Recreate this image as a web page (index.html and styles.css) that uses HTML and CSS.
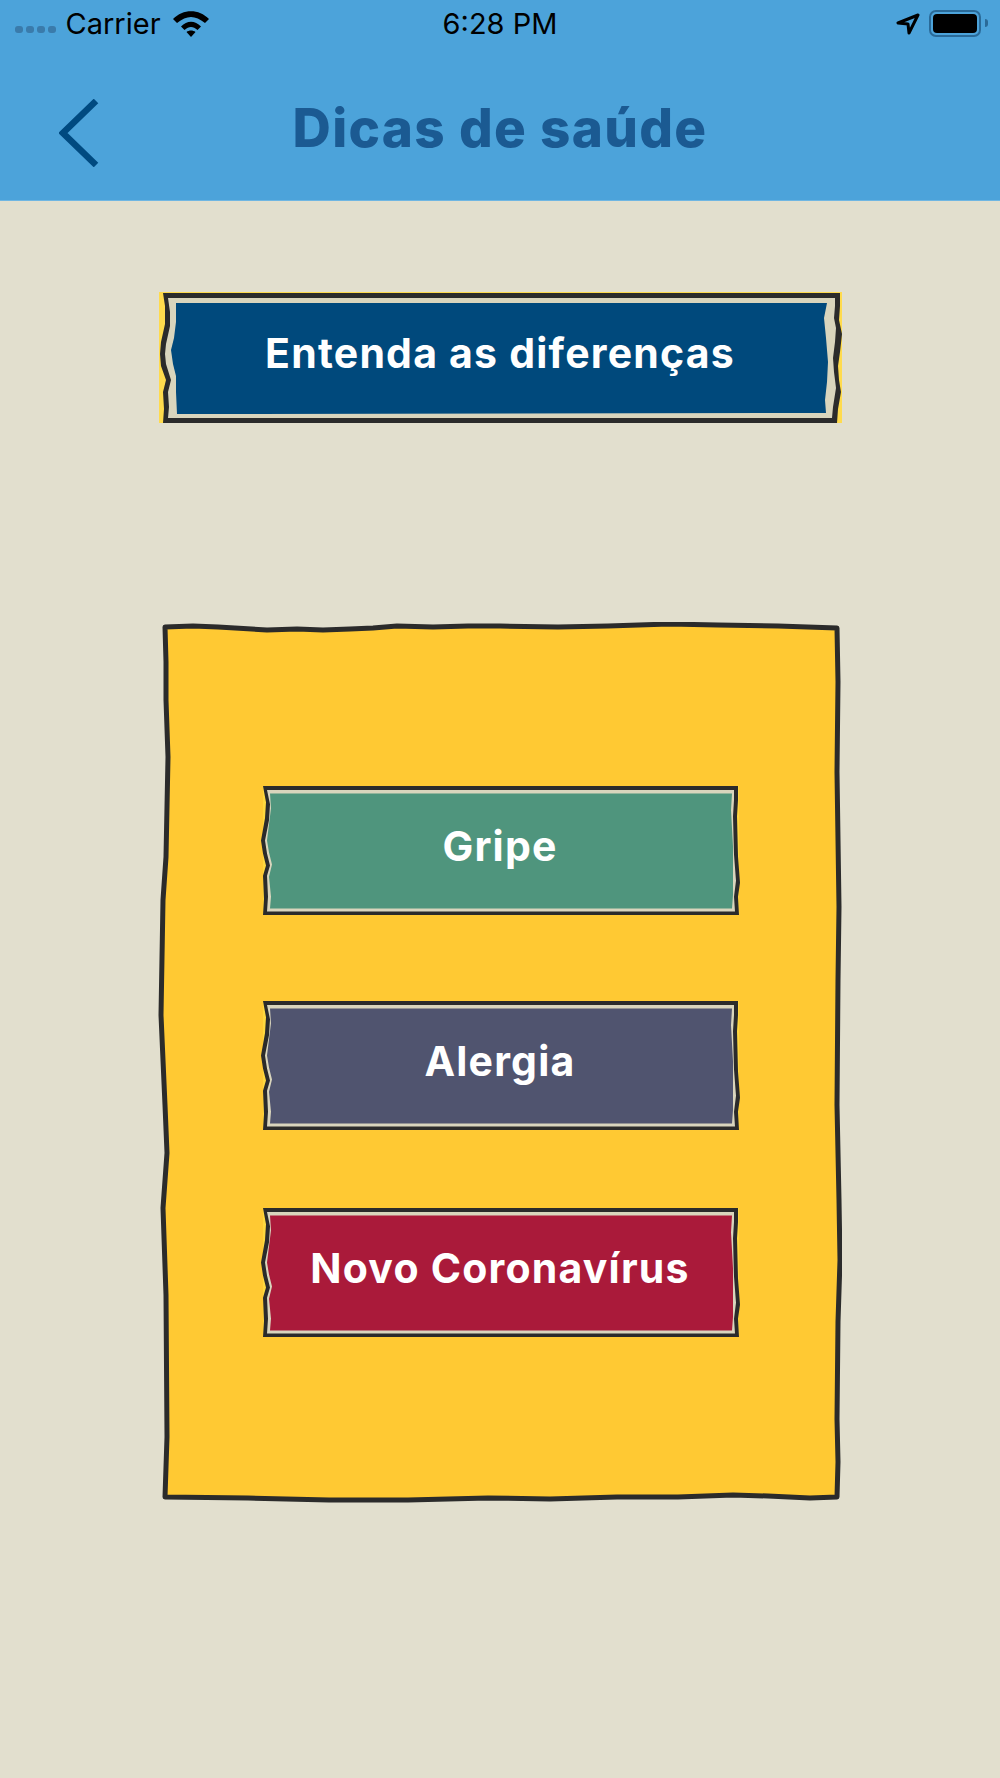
FILE: index.html
```html
<!DOCTYPE html>
<html lang="pt-BR">
<head>
    <meta charset="UTF-8">
    <meta name="viewport" content="width=device-width, initial-scale=1.0">
    <title>Dicas de saúde</title>
    <link rel="stylesheet" href="styles.css">
</head>
<body>

<!-- hand drawn button frames, coloured through currentColor -->
<svg class="defs" aria-hidden="true">
    <symbol id="frameWide" viewBox="0 0 684 131" preserveAspectRatio="none">
        <rect x="1" y="0" width="683" height="131" fill="#ffdb4d"/>
        <polygon fill="#2b2b2b" points="5,1 7,14 7,32 3,50 2,62 3,74 8,88 5,100 6,117 5,131 679,131 680,117 683,100 681,88 680,74 682,60 684,42 681,28 682,14 682,1"/>
        <polygon fill="#d9d5bd" points="10,6 12,20 12,34 8,52 7,62 8,72 13,88 10,100 11,115 10,126 674,126 675,115 678,96 676,80 675,66 677,50 678,36 676,26 677,14 677,6"/>
        <polygon fill="currentColor" points="18,11 18,30 16,46 13,58 15,72 18,84 18,100 19,122 668,121 667,108 669,90 670,70 668,46 666,26 669,11"/>
    </symbol>
    <symbol id="frameNarrow" viewBox="-1 0 480 128" preserveAspectRatio="none">
        <rect x="2" y="0" width="476" height="128" fill="#ffd83f"/>
        <polygon fill="#2b2b2b" points="2,0 5,16 4,32 0,54 2,67 5,79 2,89 3,112 2,128 478,128 477,110 479,96 477,70 476,30 477,14 477,0"/>
        <polygon fill="#d9d5bd" points="6,4 9,18 8,34 4,54 6,67 9,79 6,89 7,110 6,124.5 474,124.5 473,110 475,94 473,68 472,30 473,14 473,4"/>
        <polygon fill="currentColor" points="9,7.5 10,22 8,38 6,54 8,66 11,78 8,90 10,110 9,121.5 471,121.5 472,108 472,90 472,60 470,24 471,7.5"/>
    </symbol>
</svg>

<header class="top-bar">
    <div class="status-bar">
        <div class="status-left">
            <span class="signal"><i></i><i></i><i></i><i></i></span>
            <span>Carrier</span>
            <svg class="wifi" viewBox="0 0 36 26">
                <path d="M0 8 C10 -2.5 26 -2.5 36 8 L32 12 C22 4 14 4 4 12 Z"/>
                <path d="M8 15.5 C14 9 22 9 28 15.5 L24.5 19 C20 15 16 15 11.5 19 Z"/>
                <path d="M13.5 21 C16 19 20 19 22.5 21 L18 26 Z"/>
            </svg>
        </div>
        <div class="status-time">6:28 PM</div>
        <div class="status-right">
            <svg class="arrow" viewBox="0 0 24 22">
                <path d="M22 2 L2 10 L12 11 L13 20 Z" fill="none" stroke="#000" stroke-width="3" stroke-linejoin="round"/>
            </svg>
            <div class="battery"><div class="battery-level"></div></div>
            <div class="battery-nub"></div>
        </div>
    </div>
    <div class="nav-bar">
        <svg class="back" viewBox="0 0 40 68">
            <path d="M37 2 L4 34 L37 66" fill="none" stroke="#004a80" stroke-width="6.5"/>
        </svg>
        <h1>Dicas de saúde</h1>
    </div>
</header>

<main class="content">
    <a class="btn btn-wide">
        <svg class="frame"><use href="#frameWide"/></svg>
        <span>Entenda as diferenças</span>
    </a>

    <section class="panel">
        <svg class="panel-frame" viewBox="0 0 684 884">
            <polygon fill="#ffc933" stroke="#2b2b2b" stroke-width="5" stroke-linejoin="round" points="7,5 35,4 60,5 109,8 139,7 165,8 192,7 215,6 239,4 275,5 310,4 342,4 400,5 450,4 511,2 560,3 620,4 679,6 680,60 679,150 681,285 680,358 679,483 681,578 682,638 680,700 679,797 680,840 679,875 652,876 610,874 575,873 520,875 459,875 392,877 330,876 250,878 171,878 90,876 7,875 9,815 8,673 5,586 9,531 7,483 3,393 5,278 8,235 10,135 8,78 8,40"/>
        </svg>
        <a class="btn btn-narrow btn-green">
            <svg class="frame"><use href="#frameNarrow"/></svg>
            <span>Gripe</span>
        </a>
        <a class="btn btn-narrow btn-slate">
            <svg class="frame"><use href="#frameNarrow"/></svg>
            <span>Alergia</span>
        </a>
        <a class="btn btn-narrow btn-red">
            <svg class="frame"><use href="#frameNarrow"/></svg>
            <span>Novo Coronavírus</span>
        </a>
    </section>
</main>

</body>
</html>
```
FILE: styles.css
```css
body {
    margin: 0;
    height: 1778px;
    background-color: #e2dfce;
    font-family: "Inter", "Open Sans", sans-serif;
}

.defs {
    display: none;
}

.top-bar {
    height: 201px;
    box-sizing: border-box;
    background-color: #4ca3da;
    border-bottom: 1px solid #6fb6e2;
}

.status-bar {
    height: 46px;
    display: grid;
    grid-template-columns: 1fr auto 1fr;
    align-items: center;
    font-family: "Inter", "Liberation Sans", sans-serif;
    font-size: 29px;
    color: #000;
}

.status-left {
    display: flex;
    align-items: center;
    padding-left: 15px;
}

.signal {
    display: flex;
    gap: 3.5px;
    margin: 12px 10px 0 0;
}

.signal i {
    width: 7.5px;
    height: 7px;
    border-radius: 3px;
    background-color: #3a7bab;
}

.wifi {
    width: 36px;
    height: 26px;
    margin: 2px 0 0 12px;
}

.status-right {
    display: flex;
    align-items: center;
    justify-content: flex-end;
    padding-right: 12px;
}

.arrow {
    width: 24px;
    height: 22px;
    margin: 2px 9px 0 0;
}

.battery {
    width: 52px;
    height: 27px;
    box-sizing: border-box;
    padding: 2px;
    border: 2.5px solid #2a6a98;
    border-radius: 7px;
}

.battery-level {
    height: 100%;
    border-radius: 4px;
    background-color: #000;
}

.battery-nub {
    width: 3px;
    height: 8px;
    margin-left: 4px;
    border-radius: 0 3px 3px 0;
    background-color: #2a6a98;
}

.nav-bar {
    position: relative;
    display: flex;
    justify-content: center;
    height: 154px;
}

.back {
    position: absolute;
    left: 59px;
    top: 53px;
    width: 40px;
    height: 68px;
}

h1 {
    margin: 51px 0 0;
    font-size: 53px;
    line-height: 62px;
    font-weight: 800;
    letter-spacing: 1.3px;
    color: #1b5a92;
}

.content {
    display: flex;
    flex-direction: column;
    align-items: center;
    padding-top: 91px;
}

.btn {
    position: relative;
    display: flex;
    align-items: center;
    justify-content: center;
    box-sizing: border-box;
    font-weight: 700;
    font-size: 41px;
    letter-spacing: 1.2px;
    color: #fff;
}

.btn span {
    position: relative;
}

.frame {
    position: absolute;
    left: 0;
    top: 0;
    width: 100%;
    height: 100%;
}

.btn-wide {
    width: 684px;
    height: 131px;
    padding-bottom: 10px;
}

.btn-wide .frame {
    color: #00497c;
}

.panel {
    position: relative;
    width: 684px;
    height: 884px;
    box-sizing: border-box;
    margin-top: 199px;
    padding-top: 164px;
    display: flex;
    flex-direction: column;
    align-items: center;
}

.panel-frame {
    position: absolute;
    left: 0;
    top: 0;
    width: 684px;
    height: 884px;
}

.btn-narrow {
    width: 480px;
    height: 129px;
    padding-bottom: 10px;
}

.btn-green .frame {
    color: #4f957d;
}

.btn-slate {
    margin-top: 86px;
}

.btn-slate .frame {
    color: #50546f;
}

.btn-red {
    margin-top: 78px;
}

.btn-red .frame {
    color: #aa1a3a;
}
```
